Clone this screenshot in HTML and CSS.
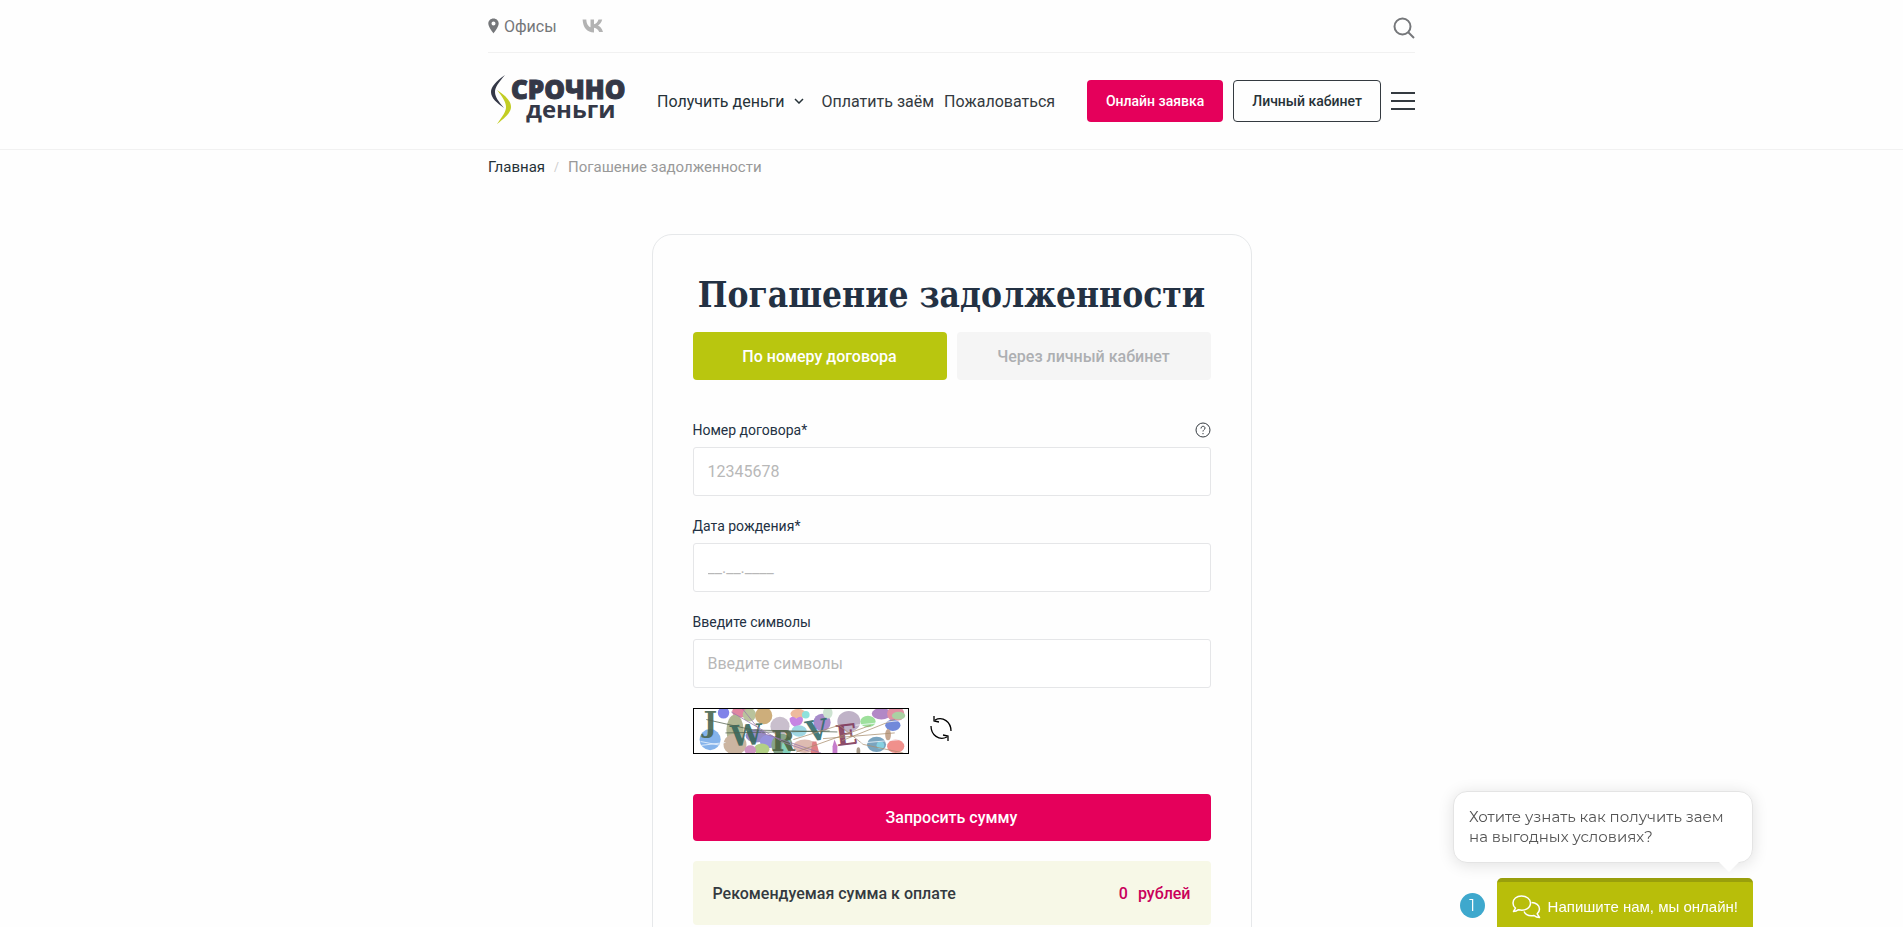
FILE: index.html
```html
<!DOCTYPE html>
<html lang="ru">
<head>
    <meta charset="UTF-8">
    <meta name="viewport" content="width=device-width, initial-scale=1.0">
    <title>Погашение задолженности</title>
    <link rel="stylesheet" href="styles.css">
</head>
<body>
    <header class="header">
        <div class="container">
            <div class="top-bar">
                <a class="offices" href="#">
                    <svg width="11" height="16" viewBox="0 0 11 16"><path fill="currentColor" fill-rule="evenodd" d="M5.500 0.500C2.500 0.500 0.300 2.800 0.300 5.600c0 3.600 5.200 9.900 5.200 9.900s5.200-6.300 5.200-9.900C10.700 2.800 8.500 0.500 5.500 0.500zm0 7.100a2 2 0 1 1 0-4 2 2 0 0 1 0 4z"/></svg>
                    Офисы
                </a>
                <a class="vk" href="#" aria-label="ВКонтакте">
                    <svg width="22" height="14" viewBox="0 0 22 14"><path fill="currentColor" d="M12 13.500C5 13.500 1 8.500 0.600 0.500h3.700c.2 5 2.500 7.200 4.200 7.700V.5H12v4.700c1.900-.3 3.800-2.300 4.500-4.700h3.700c-.6 2.900-2.600 5-4.200 6 1.600.8 4 2.700 5 6.500h-3.800c-.8-2.300-2.600-4-5.200-4.300v4.800z"/></svg>
                </a>
                <button class="search" aria-label="Поиск">
                    <svg width="22" height="22" viewBox="0 0 22 22" fill="none" stroke="currentColor" stroke-width="2"><circle cx="9.500" cy="9.500" r="8"/><path d="M15 15l6 6"/></svg>
                </button>
            </div>
            <div class="main-bar">
                <a class="logo" href="#">
                    <svg width="140" height="52" viewBox="0 0 140 52" role="img" aria-label="Срочно деньги">
                        <path fill="#343847" d="M17 0C8 6 3 12 3 17c0 6 6 11 13 16C11 27 7 22 7 17c0-5 4-10 10-17z"/>
                        <path fill="#c2cd23" d="M9 15c9 6 14 11 14 17 0 5-5 10-14 17 5-7 9-12 9-17 0-5-4-11-9-17z"/>
                        <text class="logo-bold" x="23" y="24">СРОЧНО</text>
                        <text class="logo-thin" x="38" y="43">деньги</text>
                    </svg>
                </a>
                <nav class="nav">
                    <a class="nav-drop" href="#">Получить деньги
                        <svg width="10" height="6" viewBox="0 0 10 6" fill="none" stroke="currentColor" stroke-width="1.500"><path d="M1 1l4 4 4-4"/></svg>
                    </a>
                    <a href="#">Оплатить заём</a>
                    <a href="#">Пожаловаться</a>
                </nav>
                <div class="actions">
                    <button class="btn btn-pink">Онлайн заявка</button>
                    <button class="btn btn-outline">Личный кабинет</button>
                    <button class="burger" aria-label="Меню"><span></span><span></span><span></span></button>
                </div>
            </div>
        </div>
    </header>

    <main class="container">
        <div class="breadcrumbs">
            <a href="#">Главная</a>
            <span class="slash">/</span>
            <span>Погашение задолженности</span>
        </div>

        <form class="card">
            <h1>Погашение задолженности</h1>
            <div class="tabs">
                <button type="button" class="tab active">По номеру договора</button>
                <button type="button" class="tab">Через личный кабинет</button>
            </div>

            <div class="field">
                <div class="field-head">
                    <label for="contract">Номер договора*</label>
                    <svg width="16" height="16" viewBox="0 0 16 16" fill="none" stroke="#343a40"><circle cx="8" cy="8" r="7"/><path d="M6 6.500C6 3.500 10 3.700 10 6.100 10 7.700 8 7.700 8 9.500M8 11v1.200"/></svg>
                </div>
                <input type="text" id="contract" placeholder="12345678">
            </div>
            <div class="field">
                <div class="field-head"><label for="birthday">Дата рождения*</label></div>
                <input type="text" id="birthday" placeholder="__.__.____">
            </div>
            <div class="field">
                <div class="field-head"><label for="symbols">Введите символы</label></div>
                <input type="text" id="symbols" placeholder="Введите символы">
            </div>

            <div class="captcha">
                <svg class="captcha-img" viewBox="0 0 216 46" role="img" aria-label="Символы">
                    <rect width="216" height="46" fill="#fff"/>
                    <g opacity="0.850">
                        <circle cx="13" cy="32" r="11" fill="#6fa6e8"/>
                        <circle cx="27" cy="4" r="6" fill="#6a6ee6"/>
                        <ellipse cx="44" cy="3" rx="8" ry="6" fill="#dc7192"/>
                        <ellipse cx="54" cy="6" rx="7" ry="7" fill="#adb98b"/>
                        <circle cx="69" cy="7" r="9" fill="#c5a165"/>
                        <ellipse cx="39" cy="22" rx="9" ry="16" fill="#a4aa81"/>
                        <ellipse cx="39" cy="37" rx="12" ry="11" fill="#c2a991"/>
                        <ellipse cx="61" cy="28" rx="11" ry="7" fill="#8479bd"/>
                        <circle cx="86" cy="18" r="10" fill="#c0b4c5"/>
                        <ellipse cx="74" cy="34" rx="9" ry="7" fill="#8580d8"/>
                        <ellipse cx="67" cy="42" rx="8" ry="6" fill="#a6c871"/>
                        <ellipse cx="55" cy="43" rx="6" ry="5" fill="#c783b8"/>
                        <ellipse cx="88" cy="38" rx="11" ry="12" fill="#719474"/>
                        <ellipse cx="93" cy="40" rx="5" ry="9" fill="#70c9b2"/>
                        <ellipse cx="105" cy="5" rx="8" ry="5" fill="#ecae8d"/>
                        <path d="M96 10q3-4 7 0 5-4 7 0 1 6-8 9-6-3-6-9" fill="#bd70df"/>
                        <circle cx="113" cy="6" r="4" fill="#7bdcd7"/>
                        <ellipse cx="106" cy="23" rx="8" ry="6" fill="#8fd1df"/>
                        <circle cx="130" cy="14" r="9" fill="#9878c1"/>
                        <ellipse cx="136" cy="4" rx="5" ry="6" fill="#c5dfc9"/>
                        <ellipse cx="112" cy="39" rx="12" ry="7" fill="#d9b0a4"/>
                        <path d="M118 46l2-12h4l3 12z" fill="#d96c70"/>
                        <ellipse cx="158" cy="13" rx="12" ry="11" fill="#b5a5be"/>
                        <ellipse cx="178" cy="13" rx="8" ry="6" fill="#8edb8b"/>
                        <path d="M141 46v-7l2-7 3 7v7z" fill="#bd68c4"/>
                        <ellipse cx="192" cy="5" rx="10" ry="6" fill="#a574bd"/>
                        <ellipse cx="207" cy="5" rx="9" ry="8" fill="#de7e94"/>
                        <ellipse cx="210" cy="7" rx="7" ry="4" fill="#9dc994"/>
                        <ellipse cx="204" cy="17" rx="8" ry="6" fill="#5975d4"/>
                        <ellipse cx="199" cy="27" rx="3" ry="6" fill="#bc987e"/>
                        <ellipse cx="187" cy="37" rx="10" ry="8" fill="#6395b5"/>
                        <circle cx="191" cy="38" r="4" fill="#72c8dc"/>
                        <ellipse cx="207" cy="39" rx="9" ry="7" fill="#ee7d78"/>
                        <ellipse cx="168" cy="44" rx="2" ry="4" fill="#9b8b78"/>
                    </g>
                    <g class="captcha-text">
                        <text x="6" y="24" fill="#496651">J</text>
                        <text x="34" y="38" fill="#36675c" transform="rotate(-4 48 26)">W</text>
                        <text x="77" y="44" fill="#4c6140">R</text>
                        <text x="113" y="33" fill="#326c6c" transform="rotate(-10 124 22)">V</text>
                        <text x="144" y="38" fill="#813b5c" transform="rotate(-7 153 28)">E</text>
                    </g>
                    <g fill="none" stroke-width="0.800">
                        <path stroke="#53614f" d="M9 11l49 11 88 2M29 25l109-2"/>
                        <path stroke="#9879ac" d="M35 3l55 32 26 9M47 0l20 25 62 21"/>
                        <path stroke="#aa8f70" d="M100 32l48-15 25 20 42 9M151 33l55-22M131 31l75-6M103 45l78-28"/>
                        <path stroke="#f4faff" d="M3 34l21 4M4 38l25-3M165 17l48-5M166 36l46-4"/>
                    </g>
                </svg>
                <button type="button" class="refresh" aria-label="Обновить">
                    <svg width="24" height="26" viewBox="0 0 24 26" fill="none" stroke="currentColor" stroke-width="1.300"><path d="M6 5c8-4 16 2 16 11M5 1v5l5 1M18 22C10 26 2 20 2 11M14 20l5 1v5"/></svg>
                </button>
            </div>

            <button type="submit" class="submit">Запросить сумму</button>
            <div class="total">
                <span>Рекомендуемая сумма к оплате</span>
                <span class="sum"><span>0</span><span>рублей</span></span>
            </div>
        </form>
    </main>

    <div class="chat">
        <div class="chat-bubble">Хотите узнать как получить заем на выгодных условиях?</div>
        <div class="chat-row">
            <span class="chat-count">1</span>
            <button class="chat-button">
                <svg width="29" height="24" viewBox="0 0 29 24" fill="none" stroke="#fff" stroke-width="1.500" stroke-linejoin="round"><path d="M9.500 1C4.500 1 1 4 1 8c0 2 1 4 2.500 5.200L1.500 16.500c2 0 3.500-.6 5-1.800 6.500 1.600 12-1.700 12-6.700 0-4-4-7-9-7z"/><path d="M19.500 7.500c4.500 0 8 2.800 8 6.500 0 2-1 3.500-2.300 4.800l2.300 3.700c-2 0-4-.7-5.500-2-4.500.8-8.500-.8-10-4"/></svg>
                Напишите нам, мы онлайн!
            </button>
        </div>
    </div>
</body>
</html>
```
FILE: styles.css
```css
* {
    box-sizing: border-box;
}

body {
    margin: 0;
    background-color: #fefefe;
    font-family: Roboto, Arial, sans-serif;
    font-size: 16px;
    color: #343a40;
}

a {
    color: inherit;
    text-decoration: none;
}

button {
    padding: 0;
    border: none;
    background: none;
    font-family: inherit;
    color: inherit;
    cursor: pointer;
}

svg {
    display: block;
    flex-shrink: 0;
}

.container {
    max-width: 927px;
    margin: 0 auto;
}

/* header */
.header {
    border-bottom: 1px solid #f1f1f1;
}

.top-bar {
    display: flex;
    align-items: center;
    height: 53px;
    border-bottom: 1px solid #f1f1f1;
    color: #75777a;
}

.offices {
    display: flex;
    align-items: center;
    gap: 5px;
}

.vk {
    margin-left: 25px;
    color: #b3b3b3;
}

.search {
    margin-left: auto;
    padding-top: 4px;
}

.main-bar {
    display: flex;
    align-items: center;
    height: 96px;
}

.logo {
    margin-right: 29px;
}

.logo svg {
    overflow: visible;
}

.logo text {
    font-family: "Open Sans", sans-serif;
    fill: #343847;
}

.logo .logo-bold {
    font-size: 26px;
    font-weight: 800;
    stroke: #343847;
    stroke-width: 1px;
}

.logo .logo-thin {
    font-size: 24px;
    font-weight: 700;
}

.nav {
    display: flex;
    gap: 10px;
    white-space: nowrap;
}

.nav-drop {
    display: flex;
    align-items: center;
    gap: 9px;
    margin-right: 8px;
    color: #263238;
}

.actions {
    display: flex;
    align-items: center;
    gap: 10px;
    margin-left: auto;
}

.btn {
    height: 42px;
    border-radius: 4px;
    font-size: 14px;
    font-weight: 500;
    white-space: nowrap;
}

.btn-pink {
    padding: 0 19px;
    background-color: #e5005b;
    color: #fff;
}

.btn-outline {
    padding: 0 18px;
    border: 1px solid #343a40;
    color: #263238;
}

.burger {
    display: flex;
    flex-direction: column;
    gap: 6px;
    width: 24px;
}

.burger span {
    width: 100%;
    height: 2px;
    background-color: #343a40;
}

/* breadcrumbs */
.breadcrumbs {
    display: flex;
    gap: 9px;
    padding-top: 8px;
    font-size: 15px;
    line-height: 18px;
    color: #999;
}

.breadcrumbs a {
    color: #263238;
}

.breadcrumbs .slash {
    font-size: 12px;
    color: #ccc;
}

/* form */
.card {
    max-width: 600px;
    margin: 58px auto 60px;
    padding: 40px;
    border: 1px solid #e6e8ea;
    border-radius: 20px;
}

h1 {
    margin: 0 0 17px;
    font-family: "Roboto Slab", "DejaVu Serif Condensed", "DejaVu Serif", serif;
    font-size: 35px;
    font-weight: 700;
    line-height: 40px;
    text-align: center;
    color: #233143;
    white-space: nowrap;
}

.tabs {
    display: grid;
    grid-template-columns: 1fr 1fr;
    gap: 10px;
    margin-bottom: 40px;
}

.tab {
    height: 48px;
    border-radius: 4px;
    background-color: #f5f5f5;
    font-size: 16px;
    font-weight: 500;
    color: #adafb2;
}

.tab.active {
    background-color: #b9c60f;
    color: #fff;
}

.field {
    margin-bottom: 20px;
}

.field-head {
    display: flex;
    align-items: center;
    justify-content: space-between;
    margin-bottom: 7px;
    font-size: 14px;
    line-height: 20px;
    color: #233143;
}

.field input {
    display: block;
    width: 100%;
    height: 49px;
    padding: 0 14px;
    border: 1px solid #e5e6e8;
    border-radius: 3px;
    background-color: #fff;
    font-family: inherit;
    font-size: 16px;
}

.field input::placeholder {
    color: #b8b8b8;
}

.captcha {
    display: flex;
    align-items: center;
    gap: 20px;
    margin-bottom: 40px;
}

.captcha-img {
    width: 216px;
    height: 46px;
    border: 1px solid #000;
}

.captcha-text {
    font-family: "DejaVu Serif", serif;
    font-size: 30px;
    font-weight: 700;
    opacity: 0.9;
}

.refresh {
    padding-bottom: 6px;
    color: #000;
}

.submit {
    width: 100%;
    height: 47px;
    margin-bottom: 20px;
    border-radius: 4px;
    background-color: #e5005b;
    font-size: 16px;
    font-weight: 500;
    color: #fff;
}

.total {
    display: flex;
    align-items: center;
    justify-content: space-between;
    height: 64px;
    padding: 0 20px;
    border-radius: 4px;
    background-color: #f7f8e7;
    font-weight: 500;
}

.sum {
    display: flex;
    gap: 10px;
    color: #c9005b;
}

/* chat */
.chat {
    position: fixed;
    right: 150px;
    bottom: 0;
    width: 300px;
}

.chat-bubble {
    position: relative;
    margin-bottom: 15px;
    padding: 15px;
    border: 1px solid #e4e4e4;
    border-radius: 14px;
    background-color: #fff;
    box-shadow: 0 2px 16px rgba(0, 0, 0, 0.12);
    font-family: Montserrat, "Open Sans", sans-serif;
    font-size: 15px;
    line-height: 20px;
    color: #555;
}

.chat-bubble::after {
    content: "";
    position: absolute;
    right: 12px;
    bottom: -10px;
    border: 11px solid transparent;
    border-top-color: #fff;
    border-bottom: none;
}

.chat-row {
    display: flex;
    align-items: center;
    justify-content: flex-end;
    gap: 12px;
}

.chat-count {
    flex-shrink: 0;
    width: 25px;
    height: 25px;
    margin-top: 6px;
    border-radius: 50%;
    background-color: #3ea8cd;
    font-family: Montserrat, "Open Sans", sans-serif;
    line-height: 25px;
    text-align: center;
    color: #fff;
}

.chat-button {
    display: flex;
    align-items: center;
    gap: 7px;
    height: 49px;
    padding: 4px 15px 0;
    border-top: 4px solid #999f0c;
    border-radius: 5px 5px 0 0;
    background-color: #b8be0a;
    font-family: "Liberation Sans", Arial, sans-serif;
    font-size: 15px;
    white-space: nowrap;
    color: #fff;
}
```
